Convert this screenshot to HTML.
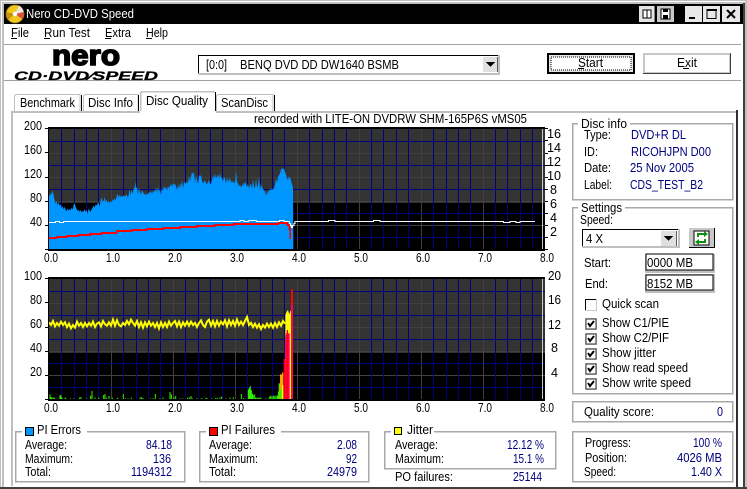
<!DOCTYPE html>
<html><head><meta charset="utf-8"><title>Nero CD-DVD Speed</title>
<style>
html,body{margin:0;padding:0;background:#fff;overflow:hidden}
svg{display:block;position:absolute;left:0;top:0}
text{font-family:"Liberation Sans","IPAGothic",sans-serif;font-size:12.5px;fill:#000}
.b{fill:#000080}
.w{fill:#fff}
</style></head><body>
<svg width="747" height="489" viewBox="0 0 747 489" shape-rendering="crispEdges">
<defs>
<g id="chart">
<rect x="48" y="127" width="497" height="124" fill="#000"/>
<rect x="49" y="129" width="496" height="74" fill="#333"/>
<path d="M111.5 129V249M173.5 129V249M235.5 129V249M297.5 129V249M359.5 129V249M421.5 129V249M483.5 129V249M49 225.5H545M49 201.5H545M49 177.5H545M49 153.5H545" stroke="#404040" fill="none"/>
<path d="M61.5 129V249M74.5 129V249M86.5 129V249M98.5 129V249M123.5 129V249M136.5 129V249M148.5 129V249M160.5 129V249M185.5 129V249M198.5 129V249M210.5 129V249M222.5 129V249M247.5 129V249M260.5 129V249M272.5 129V249M284.5 129V249M309.5 129V249M322.5 129V249M334.5 129V249M346.5 129V249M371.5 129V249M383.5 129V249M396.5 129V249M408.5 129V249M433.5 129V249M446.5 129V249M458.5 129V249M470.5 129V249M495.5 129V249M507.5 129V249M520.5 129V249M532.5 129V249M49 141.5H545M49 165.5H545M49 189.5H545M49 213.5H545M49 237.5H545" stroke="#000080" fill="none"/>
<rect x="542" y="129" width="1" height="120" fill="#c8c8c8"/>
<path d="M45 128.5H48M45 152.5H48M45 177.5H48M45 201.5H48M45 225.5H48M45 249.5H48" stroke="#000" fill="none"/>
</g>
</defs>

<!-- window frame -->
<rect width="747" height="489" fill="#c0c0c0"/>
<rect x="1" y="1" width="744" height="486" fill="#fff"/>
<rect x="2" y="2" width="743" height="485" fill="#c0c0c0"/>
<rect x="4" y="4" width="739" height="483" fill="#fff"/>
<rect x="743" y="3" width="2" height="485" fill="#404040"/>
<rect x="0" y="487" width="747" height="2" fill="#404040"/>
<rect x="4" y="4" width="739" height="20" fill="#000"/>

<!-- title icon -->
<g shape-rendering="auto">
<circle cx="15" cy="14" r="9" fill="#f2c81e"/>
<circle cx="15" cy="14" r="9" fill="none" stroke="#8a6a10" stroke-width=".7"/>
<path d="M15 14L19 5.5A9 9 0 0 1 23.5 12Z" fill="#f0e8e0"/>
<path d="M15 14L23.5 12A9 9 0 0 1 22 19Z" fill="#e05040"/>
<path d="M15 14L8 20A9 9 0 0 1 6.5 12Z" fill="#c89010"/>
<circle cx="15" cy="14" r="2.2" fill="#fff"/>
</g>
<text x="26" y="18" class="w" textLength="108" lengthAdjust="spacingAndGlyphs">Nero CD-DVD Speed</text>

<!-- title buttons -->
<g>
<rect x="639" y="6" width="16" height="16" fill="#e4e4e4"/><rect x="654" y="6" width="1" height="16" fill="#808080"/>
<rect x="643" y="10" width="4" height="8" fill="#fff" stroke="#000"/><rect x="647" y="10" width="4" height="8" fill="#fff" stroke="#000"/>
<rect x="657" y="6" width="17" height="16" fill="#c8c8c8"/>
<rect x="661" y="9" width="9" height="10" fill="#fff" stroke="#000"/><rect x="663" y="9" width="5" height="3" fill="#000"/><rect x="663" y="15" width="5" height="4" fill="#000"/>
<rect x="685" y="6" width="17" height="16" fill="#e8e8e8"/><rect x="689" y="17" width="6" height="2" fill="#000"/>
<rect x="703" y="6" width="17" height="16" fill="#e8e8e8"/><rect x="707" y="9.5" width="9" height="9" fill="none" stroke="#000"/><rect x="707" y="9" width="10" height="2" fill="#000"/>
<rect x="722" y="6" width="18" height="16" fill="#e8e8e8"/>
<path d="M727 10L735 18M735 10L727 18" stroke="#000" stroke-width="2" shape-rendering="auto"/>
</g>

<!-- menu -->
<text x="11" y="37" textLength="18" lengthAdjust="spacingAndGlyphs">File</text><rect x="11" y="38" width="6" height="1" fill="#000"/>
<text x="44" y="37" textLength="46" lengthAdjust="spacingAndGlyphs">Run Test</text><rect x="44" y="38" width="6" height="1" fill="#000"/>
<text x="105" y="37" textLength="26" lengthAdjust="spacingAndGlyphs">Extra</text><rect x="105" y="38" width="6" height="1" fill="#000"/>
<text x="146" y="37" textLength="22" lengthAdjust="spacingAndGlyphs">Help</text><rect x="146" y="38" width="6" height="1" fill="#000"/>
<rect x="4" y="44" width="737" height="1" fill="#a0a0a0"/>
<rect x="4" y="80" width="737" height="1" fill="#a0a0a0"/>

<!-- logo -->
<g shape-rendering="auto">
<text x="52" y="65" textLength="68" lengthAdjust="spacingAndGlyphs" style="font-family:'Liberation Sans',sans-serif;font-weight:bold;font-size:29px;stroke:#000;stroke-width:1.6">nero</text>
<text x="14" y="80" textLength="144" lengthAdjust="spacingAndGlyphs" style="font-family:'Liberation Sans',sans-serif;font-weight:bold;font-style:italic;font-size:12px;stroke:#000;stroke-width:.3">CD·DVD⁄SPEED</text>
</g>

<!-- drive combo -->
<rect x="198" y="55" width="302" height="20" fill="#c0c0c0"/>
<rect x="198" y="55" width="300" height="18" fill="#000"/>
<rect x="199" y="56" width="299" height="17" fill="#fff"/>
<text x="206" y="69" textLength="21" lengthAdjust="spacingAndGlyphs">[0:0]</text>
<text x="240" y="69" textLength="159" lengthAdjust="spacingAndGlyphs">BENQ DVD DD DW1640 BSMB</text>
<rect x="483" y="57" width="15" height="15" fill="#e0e0e0"/><rect x="497" y="57" width="1" height="15" fill="#606060"/>
<path d="M486 62H495L490.500 67Z" fill="#000"/>

<!-- buttons -->
<rect x="547" y="53" width="88" height="21" fill="#000"/>
<rect x="549" y="55" width="84" height="17" fill="#e4e4e4"/>
<rect x="551" y="57" width="80" height="13" fill="#fff" stroke="#000" stroke-dasharray="1 1"/>
<text x="578" y="67" textLength="25" lengthAdjust="spacingAndGlyphs">Start</text><rect x="578" y="68" width="6" height="1" fill="#000"/>
<rect x="643" y="53" width="88" height="21" fill="#c8c8c8"/>
<rect x="645" y="55" width="84" height="17" fill="#fff"/>
<rect x="730" y="53" width="1" height="21" fill="#404040"/><rect x="643" y="73" width="88" height="1" fill="#404040"/>
<text x="677" y="67" textLength="20" lengthAdjust="spacingAndGlyphs">Exit</text><rect x="683" y="68" width="6" height="1" fill="#000"/>

<!-- tab panel -->
<rect x="11" y="111" width="727" height="2" fill="#c0c0c0"/>
<rect x="11" y="111" width="2" height="375" fill="#c0c0c0"/>
<rect x="736" y="110" width="2" height="377" fill="#303030"/>

<!-- tabs -->
<path d="M14.500 111V96L16 94.500H80V111" fill="#fff" stroke="#c0c0c0"/><rect x="81" y="95" width="1" height="16" fill="#000"/>
<path d="M83.500 111V96L85 94.500H138V111" fill="#fff" stroke="#c0c0c0"/><rect x="138" y="95" width="1" height="16" fill="#000"/>
<path d="M216.500 111V96L218 94.500H273V111" fill="#fff" stroke="#c0c0c0"/><rect x="274" y="95" width="1" height="16" fill="#000"/>
<rect x="140" y="91" width="76" height="22" fill="#fff"/>
<path d="M140.500 111V93L142 91.500H215" fill="none" stroke="#c0c0c0" stroke-width="1.500"/><rect x="215" y="92" width="1" height="19" fill="#000"/>
<text x="20" y="107" textLength="55" lengthAdjust="spacingAndGlyphs">Benchmark</text>
<text x="88" y="107" textLength="45" lengthAdjust="spacingAndGlyphs">Disc Info</text>
<text x="146" y="105" textLength="62" lengthAdjust="spacingAndGlyphs">Disc Quality</text>
<text x="221" y="107" textLength="47" lengthAdjust="spacingAndGlyphs">ScanDisc</text>

<text x="254" y="123" textLength="273" lengthAdjust="spacingAndGlyphs">recorded with LITE-ON DVDRW SHM-165P6S vMS05</text>

<!-- TOP chart -->
<use href="#chart"/>
<g transform="translate(0,115) scale(.33333)" shape-rendering="auto">
<path fill="#0096ff" d="M147 405V240L150 243 153 232 156 238 158 225 161 240 164 258 167 265 170 258 173 270 176 262 179 272 182 268 185 280 188 272 191 283 194 275 197 285 200 288 203 280 206 287 209 282 212 285 215 278 218 283 221 270 224 264 227 276 230 282 233 288 236 284 239 291 242 285 245 292 248 288 251 290 254 282 257 290 260 285 263 297 266 280 269 287 272 290 275 282 278 278 281 272 284 278 287 268 290 272 293 265 296 262 299 275 302 255 305 248 308 262 311 256 314 246 317 262 320 254 323 264 326 258 329 265 332 258 335 262 338 252 341 258 344 250 347 255 350 244 353 235 356 248 359 240 362 246 365 243 368 246 371 240 374 245 377 242 380 238 383 248 386 240 389 222 392 240 395 224 398 236 401 222 404 218 406 198 408 222 411 214 414 240 417 218 420 230 423 240 426 225 429 232 432 236 435 238 438 240 441 235 444 238 447 230 450 234 453 228 456 238 459 226 462 232 465 226 468 218 471 232 474 215 477 230 480 222 483 240 486 218 489 228 492 212 495 222 498 216 501 226 504 212 507 220 510 214 513 206 516 216 519 204 522 210 525 206 528 214 531 225 534 208 537 222 540 204 543 216 546 195 549 220 552 205 555 200 558 208 561 198 564 204 567 182 570 200 573 184 576 172 579 178 582 170 585 205 588 182 591 196 594 206 597 180 600 184 603 180 606 196 609 206 612 200 615 196 618 204 621 208 624 200 627 195 630 208 633 206 636 196 639 180 642 192 645 176 648 190 651 184 654 178 657 190 660 174 663 188 666 186 669 200 672 184 675 192 678 206 681 186 684 200 687 196 690 188 693 204 696 196 699 204 702 198 705 206 708 168 711 200 714 205 717 214 720 208 723 216 726 214 729 204 732 212 735 200 738 206 741 216 744 206 747 220 750 210 753 206 756 222 759 194 762 214 765 220 768 190 771 218 774 210 777 184 780 225 783 206 786 216 789 222 792 226 795 230 798 242 801 226 804 238 807 222 810 228 813 220 816 226 819 220 822 222 825 208 828 190 831 204 834 186 837 180 840 176 843 164 846 160 849 164 852 158 855 172 858 178 861 190 864 194 867 183 870 190 873 196 876 208 879 218 880 405Z"/>
</g>
<g transform="translate(0,115) scale(.33333)">
<path fill="none" stroke="#fff" stroke-width="3" d="M147 322.500H166V319.500H178V322.500H190V319.500H720V316.500H732V319.500H745V316.500H770V319.500H838V316.500H852V319.500H868V325.500H871V331.500H874V337.500H878V331.500H882V325.500H885V319.500H985V316.500H1005V319.500H1120V316.500H1140V319.500H1510V322.500H1530V319.500H1548V322.500H1560V319.500H1605"/>
<path fill="none" stroke="#f00" stroke-width="5" d="M147 369H170V366H200V363H235V360H270V357H305V354H350V348H395V345H440V342H490V339H540V336H590V333H645V330H700V327H835V324H862V330H868V342H871V372"/>
</g>
<rect x="48" y="127" width="497" height="2" fill="#000"/>
<rect x="48" y="249" width="497" height="2" fill="#000"/>
<rect x="48" y="127" width="1" height="124" fill="#000"/>
<path d="M545 128.500H548M545 140.500H548M545 153.500H548M545 165.500H548M545 177.500H548M545 189.500H548M545 201.500H548M545 213.500H548M545 225.500H548M545 237.500H548M545 249.500H548" stroke="#000" fill="none"/>

<!-- BOTTOM chart -->
<use href="#chart" transform="translate(0,150)"/>
<g transform="translate(0,265) scale(.33333)" shape-rendering="auto">
<path fill="none" stroke="#ffff00" stroke-width="6" d="M147 172 153 180 159 168 165 184 171 174 177 182 183 170 189 180 195 172 201 186 207 176 213 190 219 180 225 188 231 170 237 182 243 174 249 186 255 174 261 184 267 174 273 182 279 170 285 186 291 176 297 172 303 184 309 168 315 178 321 182 327 172 333 182 339 164 345 182 351 166 357 180 363 184 369 174 375 180 381 168 387 178 393 164 399 174 405 182 411 168 417 186 423 172 429 188 435 172 441 184 447 170 453 182 459 174 465 186 471 174 477 190 483 172 489 186 495 174 501 186 507 170 513 182 519 174 525 168 531 184 537 170 543 186 549 172 555 182 561 170 567 182 573 170 579 180 585 174 591 186 597 174 603 166 609 180 615 186 621 170 627 164 633 182 639 168 645 184 651 168 657 182 663 170 669 178 675 166 681 184 687 166 693 180 699 168 705 182 711 164 717 180 723 170 729 180 735 168 741 156 747 180 753 174 759 186 765 176 771 188 777 178 783 192 789 180 795 188 801 176 807 186 813 176 819 188 825 174 831 186 837 172 843 182 849 168 855 176"/>
<path fill="#ffff00" d="M856 180V150L860 140 864 135 868 148 872 135 876 155 876 230H856Z"/>
<path fill="none" stroke="#33ee00" stroke-width="3" d="M150 405V388M153 405V396M156 405V398M160 405V398M164 405V398M180 405V391M183 405V391M186 405V398M193 405V400M197 405V398M211 405V400M221 405V400M239 405V397M243 405V396M260 405V400M272 405V392M276 405V378M285 405V398M296 405V398M311 405V390M315 405V387M320 405V398M327 405V393M337 405V398M353 405V398M370 405V387M376 405V400M384 405V400M394 405V398M420 405V398M424 405V396M429 405V399M451 405V400M459 405V400M466 405V387M480 405V400M489 405V398M510 405V381M514 405V388M522 405V397M527 405V393M540 405V400M548 405V400M563 405V398M568 405V397M573 405V393M577 405V400M590 405V400M605 405V399M618 405V398M622 405V400M636 405V400M647 405V399M652 405V399M660 405V397M665 405V395M677 405V400M690 405V398M700 405V397M724 405V387M731 405V399M745 405V373M748 405V368M751 405V363M754 405V375M757 405V385M760 405V390M764 405V388M767 405V398M771 405V398M775 405V398M779 405V398M783 405V398M797 405V400M808 405V395M812 405V392M816 405V394M820 405V392M824 405V394M828 405V392M832 405V392M835 405V380"/>
<path fill="#66e000" d="M836 405V355H846V405Z"/>
<path fill="#ffa000" d="M840 378V328H846V322H850V405H846V370Z"/>
<path fill="#ffff00" d="M846 405V360H850V405Z"/>
<path fill="#ff0000" d="M851 405V282H856V405Z"/>
<path fill="#ff0060" d="M855 405V232L858 205H870V405Z"/>
<path fill="#ff0000" d="M860 405V195H864V405Z"/>
<path fill="#ffff00" d="M869 405V155H873V405Z"/>
<path fill="#ff0060" d="M873 405V118H879V405Z"/>
<path fill="#ff0000" d="M873 118V75L879 72V118Z"/>
</g>
<rect x="48" y="277" width="497" height="2" fill="#000"/>
<rect x="48" y="399" width="497" height="2" fill="#000"/>
<rect x="48" y="277" width="1" height="124" fill="#000"/>

<!-- axis labels top -->
<text x="24" y="130" textLength="18" lengthAdjust="spacingAndGlyphs">200</text>
<text x="24" y="154" textLength="18" lengthAdjust="spacingAndGlyphs">160</text>
<text x="24" y="178" textLength="18" lengthAdjust="spacingAndGlyphs">120</text>
<text x="30" y="202" textLength="12" lengthAdjust="spacingAndGlyphs">80</text>
<text x="30" y="226" textLength="12" lengthAdjust="spacingAndGlyphs">40</text>
<text x="547" y="138" textLength="14" lengthAdjust="spacingAndGlyphs">16</text>
<text x="547" y="152" textLength="14" lengthAdjust="spacingAndGlyphs">14</text>
<text x="547" y="166" textLength="14" lengthAdjust="spacingAndGlyphs">12</text>
<text x="547" y="180" textLength="14" lengthAdjust="spacingAndGlyphs">10</text>
<text x="550" y="194" textLength="7" lengthAdjust="spacingAndGlyphs">8</text>
<text x="550" y="208" textLength="7" lengthAdjust="spacingAndGlyphs">6</text>
<text x="550" y="222" textLength="7" lengthAdjust="spacingAndGlyphs">4</text>
<text x="550" y="236" textLength="7" lengthAdjust="spacingAndGlyphs">2</text>
<g>
<text x="44" y="262" textLength="14" lengthAdjust="spacingAndGlyphs">0.0</text><text x="106" y="262" textLength="14" lengthAdjust="spacingAndGlyphs">1.0</text><text x="168" y="262" textLength="14" lengthAdjust="spacingAndGlyphs">2.0</text><text x="230" y="262" textLength="14" lengthAdjust="spacingAndGlyphs">3.0</text><text x="292" y="262" textLength="14" lengthAdjust="spacingAndGlyphs">4.0</text><text x="354" y="262" textLength="14" lengthAdjust="spacingAndGlyphs">5.0</text><text x="416" y="262" textLength="14" lengthAdjust="spacingAndGlyphs">6.0</text><text x="478" y="262" textLength="14" lengthAdjust="spacingAndGlyphs">7.0</text><text x="540" y="262" textLength="14" lengthAdjust="spacingAndGlyphs">8.0</text>
</g>
<!-- axis labels bottom -->
<text x="24" y="280" textLength="18" lengthAdjust="spacingAndGlyphs">100</text>
<text x="30" y="304" textLength="12" lengthAdjust="spacingAndGlyphs">80</text>
<text x="30" y="328" textLength="12" lengthAdjust="spacingAndGlyphs">60</text>
<text x="30" y="352" textLength="12" lengthAdjust="spacingAndGlyphs">40</text>
<text x="30" y="376" textLength="12" lengthAdjust="spacingAndGlyphs">20</text>
<text x="548" y="280" textLength="13" lengthAdjust="spacingAndGlyphs">20</text>
<text x="548" y="304" textLength="13" lengthAdjust="spacingAndGlyphs">16</text>
<text x="548" y="329" textLength="13" lengthAdjust="spacingAndGlyphs">12</text>
<text x="551" y="352" textLength="7" lengthAdjust="spacingAndGlyphs">8</text>
<text x="551" y="377" textLength="7" lengthAdjust="spacingAndGlyphs">4</text>
<g>
<text x="44" y="412" textLength="14" lengthAdjust="spacingAndGlyphs">0.0</text><text x="106" y="412" textLength="14" lengthAdjust="spacingAndGlyphs">1.0</text><text x="168" y="412" textLength="14" lengthAdjust="spacingAndGlyphs">2.0</text><text x="230" y="412" textLength="14" lengthAdjust="spacingAndGlyphs">3.0</text><text x="292" y="412" textLength="14" lengthAdjust="spacingAndGlyphs">4.0</text><text x="354" y="412" textLength="14" lengthAdjust="spacingAndGlyphs">5.0</text><text x="416" y="412" textLength="14" lengthAdjust="spacingAndGlyphs">6.0</text><text x="478" y="412" textLength="14" lengthAdjust="spacingAndGlyphs">7.0</text><text x="540" y="412" textLength="14" lengthAdjust="spacingAndGlyphs">8.0</text>
</g>

<!-- group boxes -->
<g fill="none" stroke="#a8a8a8" stroke-width="1.500">
<rect x="572.500" y="123.500" width="160" height="76"/>
<rect x="572.500" y="207.500" width="160" height="186"/>
<rect x="572.500" y="401.500" width="160" height="20"/>
<rect x="572.500" y="431.500" width="160" height="50"/>
<rect x="15.500" y="431.500" width="169" height="50"/>
<rect x="199.500" y="431.500" width="169" height="50"/>
<rect x="384.500" y="431.500" width="171" height="37"/>
</g>
<rect x="578" y="120" width="52" height="8" fill="#fff"/>
<rect x="578" y="204" width="47" height="8" fill="#fff"/>
<rect x="22" y="428" width="65" height="8" fill="#fff"/>
<rect x="206" y="428" width="75" height="8" fill="#fff"/>
<rect x="391" y="428" width="43" height="8" fill="#fff"/>

<!-- disc info -->
<text x="581" y="128" textLength="46" lengthAdjust="spacingAndGlyphs">Disc info</text>
<text x="584" y="139" textLength="27" lengthAdjust="spacingAndGlyphs">Type:</text><text x="631" y="139" class="b" textLength="55" lengthAdjust="spacingAndGlyphs">DVD+R DL</text>
<text x="584" y="156" textLength="14" lengthAdjust="spacingAndGlyphs">ID:</text><text x="631" y="156" class="b" textLength="80" lengthAdjust="spacingAndGlyphs">RICOHJPN D00</text>
<text x="584" y="172" textLength="27" lengthAdjust="spacingAndGlyphs">Date:</text><text x="630" y="172" class="b" textLength="64" lengthAdjust="spacingAndGlyphs">25 Nov 2005</text>
<text x="584" y="189" textLength="28" lengthAdjust="spacingAndGlyphs">Label:</text><text x="630" y="189" class="b" textLength="73" lengthAdjust="spacingAndGlyphs">CDS_TEST_B2</text>

<!-- settings -->
<text x="581" y="212" textLength="41" lengthAdjust="spacingAndGlyphs">Settings</text>
<text x="580" y="224" textLength="33" lengthAdjust="spacingAndGlyphs">Speed:</text>
<rect x="582" y="229" width="98" height="19" fill="#c0c0c0"/>
<rect x="582" y="229" width="96" height="17" fill="#000"/>
<rect x="583" y="230" width="95" height="16" fill="#fff"/>
<text x="586" y="243" textLength="17" lengthAdjust="spacingAndGlyphs">4 X</text>
<rect x="661" y="231" width="16" height="15" fill="#e0e0e0"/><rect x="676" y="231" width="1" height="15" fill="#606060"/>
<path d="M664 236H673L668.500 241Z" fill="#000"/>
<rect x="689" y="228" width="26" height="20" fill="#000"/>
<rect x="689" y="228" width="25" height="19" fill="#c8c8c8"/>
<rect x="694" y="231" width="15" height="14" fill="#fff" stroke="#000"/>
<g shape-rendering="auto" fill="none" stroke="#109010" stroke-width="2">
<path d="M698 237V234H705"/><path d="M705 239V242H698"/>
</g>
<path d="M704 231L708 234 704 237ZM699 239L695 242 699 245Z" fill="#109010" shape-rendering="auto"/>

<text x="584" y="267" textLength="27" lengthAdjust="spacingAndGlyphs">Start:</text>
<rect x="645" y="254" width="70" height="19" fill="#c0c0c0"/>
<rect x="646" y="254" width="67" height="16" fill="#fff" stroke="#000"/>
<text x="647" y="267" textLength="46" lengthAdjust="spacingAndGlyphs">0000 MB</text>
<text x="585" y="288" textLength="23" lengthAdjust="spacingAndGlyphs">End:</text>
<rect x="645" y="274" width="70" height="19" fill="#c0c0c0"/>
<rect x="646" y="275" width="67" height="15" fill="#fff" stroke="#000"/>
<text x="647" y="288" textLength="46" lengthAdjust="spacingAndGlyphs">8152 MB</text>

<!-- checkboxes -->
<g>
<rect x="585" y="299" width="12" height="12" fill="#c8c8c8"/><rect x="585" y="299" width="11" height="11" fill="#000"/><rect x="586" y="300" width="10" height="10" fill="#fff"/>
<rect x="585" y="318" width="12" height="12" fill="#c8c8c8"/><rect x="586" y="319" width="10" height="10" fill="#fff" stroke="#303030"/>
<rect x="585" y="333" width="12" height="12" fill="#c8c8c8"/><rect x="586" y="334" width="10" height="10" fill="#fff" stroke="#303030"/>
<rect x="585" y="348" width="12" height="12" fill="#c8c8c8"/><rect x="586" y="349" width="10" height="10" fill="#fff" stroke="#303030"/>
<rect x="585" y="363" width="12" height="12" fill="#c8c8c8"/><rect x="586" y="364" width="10" height="10" fill="#fff" stroke="#303030"/>
<rect x="585" y="378" width="12" height="12" fill="#c8c8c8"/><rect x="586" y="379" width="10" height="10" fill="#fff" stroke="#303030"/>
<g fill="none" stroke="#000" stroke-width="2" shape-rendering="auto">
<path d="M588 323L590 326 594 321"/><path d="M588 338L590 341 594 336"/><path d="M588 353L590 356 594 351"/><path d="M588 368L590 371 594 366"/><path d="M588 383L590 386 594 381"/>
</g>
</g>
<text x="602" y="308" textLength="57" lengthAdjust="spacingAndGlyphs">Quick scan</text>
<text x="602" y="327" textLength="67" lengthAdjust="spacingAndGlyphs">Show C1/PIE</text>
<text x="602" y="342" textLength="67" lengthAdjust="spacingAndGlyphs">Show C2/PIF</text>
<text x="602" y="357" textLength="54" lengthAdjust="spacingAndGlyphs">Show jitter</text>
<text x="602" y="372" textLength="86" lengthAdjust="spacingAndGlyphs">Show read speed</text>
<text x="602" y="387" textLength="89" lengthAdjust="spacingAndGlyphs">Show write speed</text>

<!-- quality + progress -->
<text x="584" y="416" textLength="70" lengthAdjust="spacingAndGlyphs">Quality score:</text><text x="717" y="416" class="b" textLength="6" lengthAdjust="spacingAndGlyphs">0</text>
<text x="585" y="447" textLength="46" lengthAdjust="spacingAndGlyphs">Progress:</text><text x="693" y="447" class="b" textLength="29" lengthAdjust="spacingAndGlyphs">100 %</text>
<text x="585" y="462" textLength="42" lengthAdjust="spacingAndGlyphs">Position:</text><text x="677" y="462" class="b" textLength="45" lengthAdjust="spacingAndGlyphs">4026 MB</text>
<text x="584" y="476" textLength="32" lengthAdjust="spacingAndGlyphs">Speed:</text><text x="691" y="476" class="b" textLength="31" lengthAdjust="spacingAndGlyphs">1.40 X</text>

<!-- PI Errors -->
<rect x="25.500" y="427.500" width="8" height="8" fill="#0096ff" stroke="#000"/>
<text x="37" y="434" textLength="44" lengthAdjust="spacingAndGlyphs">PI Errors</text>
<text x="25" y="449" textLength="42" lengthAdjust="spacingAndGlyphs">Average:</text><text x="146" y="449" class="b" textLength="26" lengthAdjust="spacingAndGlyphs">84.18</text>
<text x="25" y="463" textLength="48" lengthAdjust="spacingAndGlyphs">Maximum:</text><text x="153" y="463" class="b" textLength="18" lengthAdjust="spacingAndGlyphs">136</text>
<text x="25" y="476" textLength="26" lengthAdjust="spacingAndGlyphs">Total:</text><text x="131" y="476" class="b" textLength="41" lengthAdjust="spacingAndGlyphs">1194312</text>

<!-- PI Failures -->
<rect x="209.500" y="427.500" width="8" height="8" fill="#f00" stroke="#000"/>
<text x="221" y="434" textLength="54" lengthAdjust="spacingAndGlyphs">PI Failures</text>
<text x="209" y="449" textLength="43" lengthAdjust="spacingAndGlyphs">Average:</text><text x="337" y="449" class="b" textLength="20" lengthAdjust="spacingAndGlyphs">2.08</text>
<text x="209" y="463" textLength="49" lengthAdjust="spacingAndGlyphs">Maximum:</text><text x="346" y="463" class="b" textLength="11" lengthAdjust="spacingAndGlyphs">92</text>
<text x="209" y="476" textLength="27" lengthAdjust="spacingAndGlyphs">Total:</text><text x="327" y="476" class="b" textLength="30" lengthAdjust="spacingAndGlyphs">24979</text>

<!-- Jitter -->
<rect x="394.500" y="427.500" width="7" height="7" fill="#ff0" stroke="#000"/>
<text x="407" y="434" textLength="26" lengthAdjust="spacingAndGlyphs">Jitter</text>
<text x="395" y="449" textLength="43" lengthAdjust="spacingAndGlyphs">Average:</text><text x="507" y="449" class="b" textLength="37" lengthAdjust="spacingAndGlyphs">12.12 %</text>
<text x="395" y="463" textLength="49" lengthAdjust="spacingAndGlyphs">Maximum:</text><text x="513" y="463" class="b" textLength="31" lengthAdjust="spacingAndGlyphs">15.1 %</text>
<text x="395" y="481" textLength="58" lengthAdjust="spacingAndGlyphs">PO failures:</text><text x="513" y="481" class="b" textLength="29" lengthAdjust="spacingAndGlyphs">25144</text>
</svg>
</body></html>
